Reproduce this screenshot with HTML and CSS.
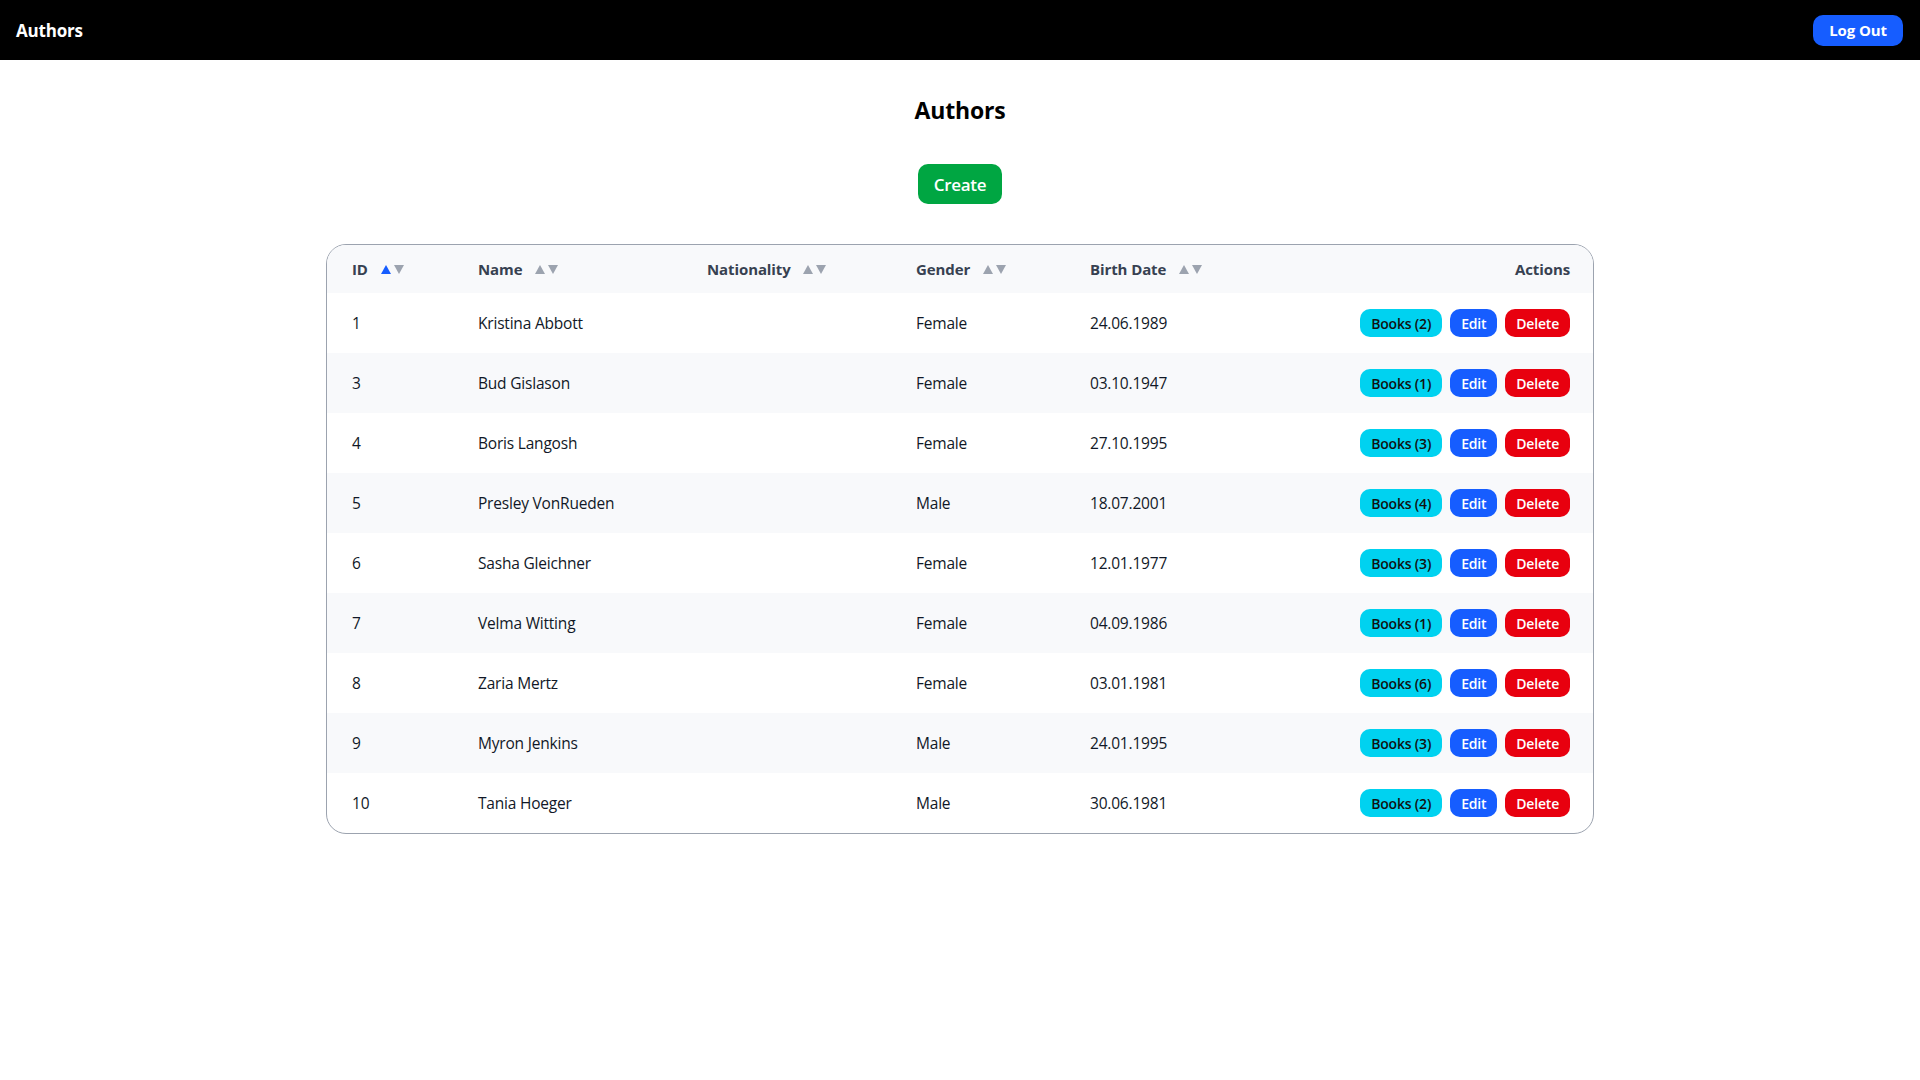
FILE: index.html
```html
<!DOCTYPE html>
<html lang="en">
<head>
<meta charset="utf-8">
<title>Authors</title>
<link rel="stylesheet" href="styles.css">
</head>
<body>
<header class="topbar">
  <div class="brand">Authors</div>
  <button class="btn-logout">Log Out</button>
</header>
<main class="page">
  <h1 class="title">Authors</h1>
  <div class="create-wrap"><button class="btn-create">Create</button></div>
  <div class="table-card">
    <table class="authors">
      <colgroup>
        <col class="c-id"><col class="c-name"><col class="c-nat"><col class="c-gender"><col class="c-birth"><col class="c-actions">
      </colgroup>
      <thead>
        <tr>
          <th>ID <span class="sort"><svg width="24" height="9" viewBox="0 0 24 9"><polygon class="up active" points="0,9 5,0 10,9"/><polygon class="down" points="13,0 23,0 18,9"/></svg></span></th>
          <th>Name <span class="sort"><svg width="24" height="9" viewBox="0 0 24 9"><polygon class="up" points="0,9 5,0 10,9"/><polygon class="down" points="13,0 23,0 18,9"/></svg></span></th>
          <th>Nationality <span class="sort"><svg width="24" height="9" viewBox="0 0 24 9"><polygon class="up" points="0,9 5,0 10,9"/><polygon class="down" points="13,0 23,0 18,9"/></svg></span></th>
          <th>Gender <span class="sort"><svg width="24" height="9" viewBox="0 0 24 9"><polygon class="up" points="0,9 5,0 10,9"/><polygon class="down" points="13,0 23,0 18,9"/></svg></span></th>
          <th>Birth Date <span class="sort"><svg width="24" height="9" viewBox="0 0 24 9"><polygon class="up" points="0,9 5,0 10,9"/><polygon class="down" points="13,0 23,0 18,9"/></svg></span></th>
          <th class="th-actions">Actions</th>
        </tr>
      </thead>
      <tbody>
        <tr><td>1</td><td>Kristina Abbott</td><td></td><td>Female</td><td>24.06.1989</td><td class="actions"><button class="btn btn-books">Books (2)</button><button class="btn btn-edit">Edit</button><button class="btn btn-delete">Delete</button></td></tr>
        <tr><td>3</td><td>Bud Gislason</td><td></td><td>Female</td><td>03.10.1947</td><td class="actions"><button class="btn btn-books">Books (1)</button><button class="btn btn-edit">Edit</button><button class="btn btn-delete">Delete</button></td></tr>
        <tr><td>4</td><td>Boris Langosh</td><td></td><td>Female</td><td>27.10.1995</td><td class="actions"><button class="btn btn-books">Books (3)</button><button class="btn btn-edit">Edit</button><button class="btn btn-delete">Delete</button></td></tr>
        <tr><td>5</td><td>Presley VonRueden</td><td></td><td>Male</td><td>18.07.2001</td><td class="actions"><button class="btn btn-books">Books (4)</button><button class="btn btn-edit">Edit</button><button class="btn btn-delete">Delete</button></td></tr>
        <tr><td>6</td><td>Sasha Gleichner</td><td></td><td>Female</td><td>12.01.1977</td><td class="actions"><button class="btn btn-books">Books (3)</button><button class="btn btn-edit">Edit</button><button class="btn btn-delete">Delete</button></td></tr>
        <tr><td>7</td><td>Velma Witting</td><td></td><td>Female</td><td>04.09.1986</td><td class="actions"><button class="btn btn-books">Books (1)</button><button class="btn btn-edit">Edit</button><button class="btn btn-delete">Delete</button></td></tr>
        <tr><td>8</td><td>Zaria Mertz</td><td></td><td>Female</td><td>03.01.1981</td><td class="actions"><button class="btn btn-books">Books (6)</button><button class="btn btn-edit">Edit</button><button class="btn btn-delete">Delete</button></td></tr>
        <tr><td>9</td><td>Myron Jenkins</td><td></td><td>Male</td><td>24.01.1995</td><td class="actions"><button class="btn btn-books">Books (3)</button><button class="btn btn-edit">Edit</button><button class="btn btn-delete">Delete</button></td></tr>
        <tr><td>10</td><td>Tania Hoeger</td><td></td><td>Male</td><td>30.06.1981</td><td class="actions"><button class="btn btn-books">Books (2)</button><button class="btn btn-edit">Edit</button><button class="btn btn-delete">Delete</button></td></tr>
      </tbody>
    </table>
  </div>
</main>
</body>
</html>
```
FILE: styles.css
```css
* { box-sizing: border-box; }
html, body {
  margin: 0;
  padding: 0;
  background: #ffffff;
  font-family: "Open Sans", "Noto Sans", "Liberation Sans", sans-serif;
  color: #111827;
}
button { font-family: inherit; cursor: pointer; border: none; }

.topbar {
  height: 60px;
  background: #000000;
  display: flex;
  align-items: center;
  justify-content: space-between;
  padding: 0 17px 0 16px;
}
.brand {
  color: #ffffff;
  font-weight: 700;
  font-size: 17px;
  letter-spacing: -0.2px;
}
.btn-logout {
  height: 31px;
  padding: 0 16px;
  background: #165dff;
  color: #ffffff;
  font-size: 15px;
  font-weight: 700;
  border-radius: 10px;
  letter-spacing: -0.1px;
}

.page {
  display: flex;
  flex-direction: column;
  align-items: center;
}
.title {
  margin: 34px 0 0;
  font-size: 23px;
  line-height: 32px;
  font-weight: 700;
  color: #000000;
  letter-spacing: -0.2px;
}
.create-wrap { margin-top: 38px; }
.btn-create {
  height: 40px;
  width: 84px;
  background: #00a642;
  color: #ffffff;
  font-size: 17px;
  font-weight: 600;
  border-radius: 10px;
  letter-spacing: -0.3px;
}

.table-card {
  margin-top: 40px;
  width: 1268px;
  border: 1px solid #9ca3af;
  border-radius: 20px;
  overflow: hidden;
}
.authors {
  width: 100%;
  border-collapse: collapse;
  table-layout: fixed;
  font-size: 15.5px;
}
.c-id { width: 151px; }
.c-name { width: 229px; }
.c-nat { width: 209px; }
.c-gender { width: 174px; }
.c-birth { width: 200px; }
.c-actions { width: auto; }

.authors thead tr {
  background: #f8f9fb;
  height: 48px;
}
.authors th {
  text-align: left;
  font-weight: 700;
  font-size: 15px;
  color: #374151;
  padding: 0;
  white-space: nowrap;
  letter-spacing: -0.1px;
}
.authors th:first-child, .authors td:first-child { padding-left: 25px; }
.authors th.th-actions { text-align: right; padding-right: 23px; }
.sort { margin-left: 9px; display: inline-block; vertical-align: 1px; }
.sort svg { display: block; }
.sort .up, .sort .down { fill: #9ca3af; }
.sort .up.active { fill: #165dff; }

.authors tbody tr { height: 60px; }
.authors tbody tr:nth-child(even) { background: #f8f9fb; }
.authors td {
  padding: 0;
  color: #111827;
  letter-spacing: -0.2px;
}
.authors td.actions {
  text-align: right;
  padding-right: 23px;
  white-space: nowrap;
}
.btn {
  height: 28px;
  padding: 0 11px;
  border-radius: 10px;
  font-size: 14px;
  font-weight: 600;
  margin-left: 8px;
  vertical-align: middle;
  letter-spacing: -0.2px;
}
.btn-books { background: #00d2f0; color: #111111; font-weight: 600; }
.btn-edit { background: #165dff; color: #ffffff; }
.btn-delete { background: #e8000f; color: #ffffff; }
```
